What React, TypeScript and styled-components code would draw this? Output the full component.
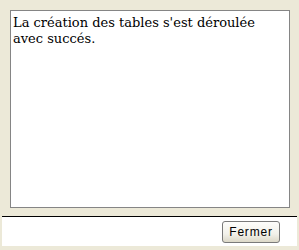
import styled, { createGlobalStyle } from 'styled-components'

const GlobalStyle = createGlobalStyle`
  html, body {
    margin: 0;
    padding: 0;
    background: #ece9d8;
  }
`

const Dialog = styled.div`
  width: 299px;
  height: 250px;
  background: #ece9d8;
  display: flex;
  flex-direction: column;
  box-sizing: border-box;
`

const Body = styled.div`
  padding: 10px 10px 0 10px;
  height: 207px;
  box-sizing: border-box;
`

const MessageBox = styled.div`
  box-sizing: border-box;
  width: 280px;
  height: 198px;
  background: #fff;
  border: 1px solid #858585;
  padding: 4px 2px;
  font-family: "DejaVu Serif", "Liberation Serif", serif;
  font-size: 13px;
  line-height: 16px;
  color: #000;
`

const Footer = styled.div`
  margin: 9px 2px 0 2px;
  height: 30px;
  background: #fff;
  border-top: 1px solid #000;
  display: flex;
  justify-content: flex-end;
  align-items: flex-start;
  padding: 4px 17px 0 0;
  box-sizing: border-box;
`

const Button = styled.button`
  width: 58px;
  height: 22px;
  box-sizing: border-box;
  border: 1px solid #7a7a7a;
  border-radius: 3px;
  background: linear-gradient(to bottom, #fdfdfb 0%, #f2f1ea 60%, #dcd8c8 100%);
  font-family: "Liberation Sans", Arial, sans-serif;
  font-size: 12px;
  letter-spacing: 0.8px;
  color: #000;
  padding: 0;
  cursor: pointer;
`

const App = () => {
  return <>
    <GlobalStyle />
    <Dialog>
      <Body>
        <MessageBox>La création des tables s'est déroulée avec succés.</MessageBox>
      </Body>
      <Footer>
        <Button>Fermer</Button>
      </Footer>
    </Dialog>
  </>
}

export default App
